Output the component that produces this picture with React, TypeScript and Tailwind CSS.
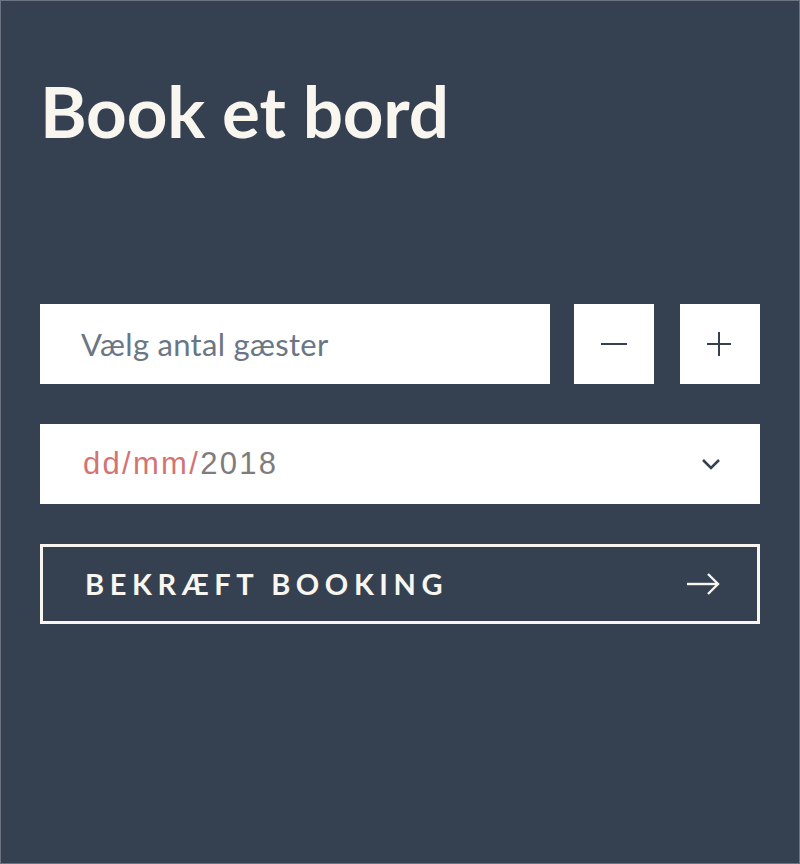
import React from 'react'

function App() {
  return (
    <div className="w-[800px] h-[864px] border border-[#6b7480] bg-[#354151] px-[39px] font-['Lato',sans-serif]">
      <h1 className="mt-[72px] text-[71px] leading-[76px] font-bold text-[#f8f6ef] tracking-[-0.2px]">Book et bord</h1>

      {/* guests */}
      <div className="mt-[155px] flex h-20">
        <div className="flex flex-1 items-center bg-white pl-[41px] text-[31px] tracking-[0.3px] text-[#6b7685]">Vælg antal gæster</div>
        <button className="ml-6 flex w-20 items-center justify-center bg-white">
          <svg width="28" height="4" viewBox="0 0 28 4">
            <line x1="1" y1="2" x2="27" y2="2" stroke="#354151" strokeWidth="2" />
          </svg>
        </button>
        <button className="ml-[26px] flex w-20 items-center justify-center bg-white">
          <svg width="26" height="26" viewBox="0 0 26 26">
            <line x1="0" y1="13" x2="24" y2="13" stroke="#354151" strokeWidth="2" />
            <line x1="12" y1="1" x2="12" y2="25" stroke="#354151" strokeWidth="2" />
          </svg>
        </button>
      </div>

      {/* date */}
      <div className="mt-10 flex h-20 items-center justify-between bg-white pl-[43px] pr-[40px]">
        <span className="font-['Liberation_Sans',sans-serif] text-[31px] tracking-[2.3px]">
          <span className="text-[#d27474]">dd/mm/</span>
          <span className="text-[#7d7d7d]">2018</span>
        </span>
        <svg width="18" height="12" viewBox="0 0 18 12">
          <polyline points="1,2 9,10 17,2" fill="none" stroke="#354151" strokeWidth="2.5" />
        </svg>
      </div>

      {/* submit */}
      <button className="mt-10 flex h-20 w-full items-center justify-between border-[3px] border-[#f8f6ef] pl-[42px] pr-[37px] text-[#f8f6ef]">
        <span className="text-[29px] font-bold tracking-[5.6px]">BEKRÆFT BOOKING</span>
        <svg width="34" height="22" viewBox="0 0 34 22">
          <line x1="1" y1="11" x2="32" y2="11" stroke="#f8f6ef" strokeWidth="2.4" />
          <polyline points="22,1 32,11 22,21" fill="none" stroke="#f8f6ef" strokeWidth="2.4" />
        </svg>
      </button>
    </div>
  )
}

export default App
